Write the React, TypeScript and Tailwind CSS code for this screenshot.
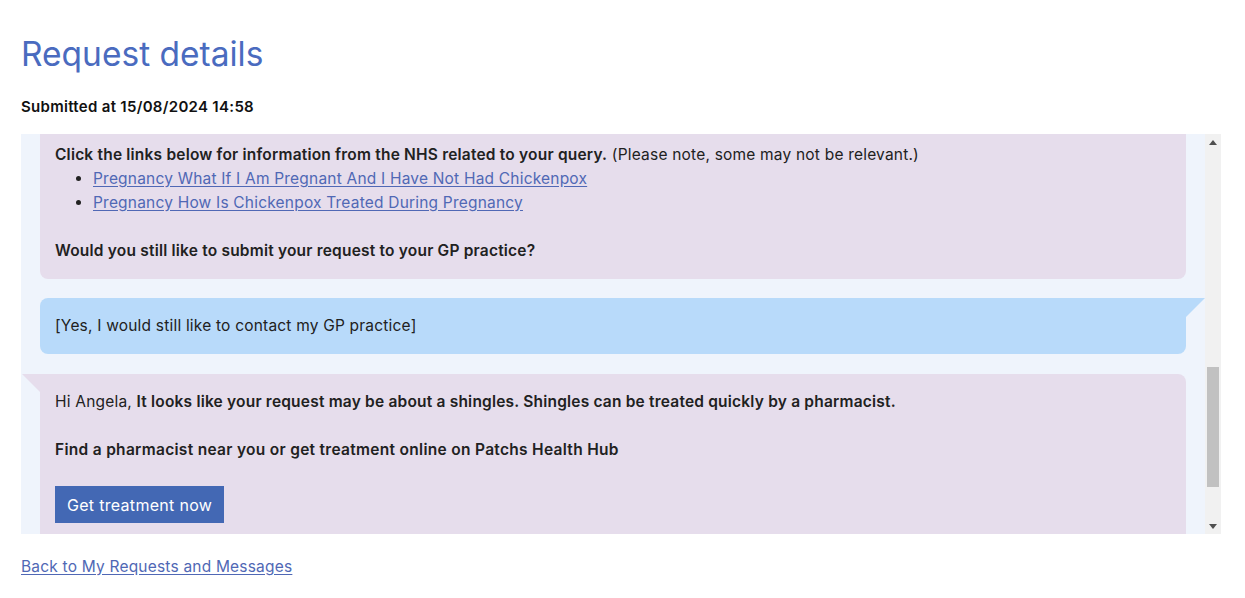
import { useLayoutEffect, useRef } from 'react';

type Msg = { from: 'practice' | 'patient'; lines: string[] };

const earlier: Msg[] = [
  { from: 'practice', lines: ['Hi Angela, what would you like help with today?'] },
  { from: 'patient', lines: ['[Something else]'] },
  { from: 'practice', lines: ['Please describe your problem in a few words.'] },
  { from: 'patient', lines: ['[I have a painful rash on one side of my body and I am pregnant]'] },
  { from: 'practice', lines: ['How long have you had this problem?'] },
  { from: 'patient', lines: ['[Less than a week]'] },
  { from: 'practice', lines: ['Have you had chickenpox before?'] },
  { from: 'patient', lines: ['[No, I have not had chickenpox]'] },
];

const PracticeBubble = ({ children }: { children: React.ReactNode }) => (
  <div className="relative mx-[19px] mb-[19px] rounded-lg rounded-tl-none bg-[#e6ddec] px-[15px] py-[16px]">
    <span className="absolute -left-[18px] top-0 h-[18px] w-[18px] bg-[#e6ddec] [clip-path:polygon(0_0,100%_0,100%_100%)]" />
    {children}
  </div>
);

const PatientBubble = ({ children, innerRef }: { children: React.ReactNode; innerRef?: React.Ref<HTMLDivElement> }) => (
  <div
    ref={innerRef}
    className="relative mx-[19px] mb-[20px] min-h-[56px] rounded-lg rounded-tr-none bg-[#b8dafa] px-[15px] py-[16px]"
  >
    <span className="absolute -right-[19px] top-0 h-[19px] w-[19px] bg-[#b8dafa] [clip-path:polygon(0_0,100%_0,0_100%)]" />
    {children}
  </div>
);

const linkCls = 'text-[#5068b5] underline underline-offset-2';

// drawn scrollbar, the page's own one is hidden
const Scrollbar = () => (
  <div className="flex w-[16px] shrink-0 flex-col items-center bg-[#f1f1f1]">
    <div className="flex h-[16px] w-full items-center justify-center">
      <svg width="8" height="5" viewBox="0 0 8 5"><path d="M4 0 L8 5 L0 5 Z" fill="#505050" /></svg>
    </div>
    <div className="h-[217px]" />
    <div className="h-[120px] w-[12px] bg-[#c1c1c1]" />
    <div className="flex-1" />
    <div className="flex h-[16px] w-full items-center justify-center">
      <svg width="8" height="5" viewBox="0 0 8 5"><path d="M0 0 L8 0 L4 5 Z" fill="#505050" /></svg>
    </div>
  </div>
);

export default function App() {
  const boxRef = useRef<HTMLDivElement>(null);
  const yesRef = useRef<HTMLDivElement>(null);

  useLayoutEffect(() => {
    if (boxRef.current && yesRef.current) {
      boxRef.current.scrollTop = yesRef.current.offsetTop - 164;
    }
  }, []);

  return (
    <div className="min-h-screen bg-white px-[21px] pt-[30px] text-[15.5px] leading-6 tracking-[0.2px] text-[#212121] [font-family:Inter,'Noto_Sans',sans-serif]">
      <h1 className="text-[33.5px] leading-[48px] font-normal tracking-normal text-[#4a6bbf]">Request details</h1>
      <div className="mt-[17px] text-[15px] font-semibold tracking-[0.3px] text-[#111]">Submitted at 15/08/2024 14:58</div>

      <div className="mt-[15px] flex h-[400px] w-[1200px] bg-[#eff4fc]">
        <div
          ref={boxRef}
          className="relative flex-1 overflow-y-scroll pt-[20px] [scrollbar-width:none]"
        >
          {earlier.map((m, i) =>
            m.from === 'practice' ? (
              <PracticeBubble key={i}>
                {m.lines.map((l) => (
                  <p key={l} className="font-semibold">{l}</p>
                ))}
              </PracticeBubble>
            ) : (
              <PatientBubble key={i}>
                {m.lines.map((l) => (
                  <p key={l}>{l}</p>
                ))}
              </PatientBubble>
            )
          )}

          <PracticeBubble>
            <p>
              Hi Angela, <span className="font-semibold">It looks like your request may be about chickenpox in pregnancy.</span>
            </p>
            <p>&nbsp;</p>
            <p>
              <span className="font-semibold">Click the links below for information from the NHS related to your query.</span>{' '}
              (Please note, some may not be relevant.)
            </p>
            <ul className="list-disc pl-[38px]">
              <li>
                <a href="#" className={linkCls}>Pregnancy What If I Am Pregnant And I Have Not Had Chickenpox</a>
              </li>
              <li>
                <a href="#" className={linkCls}>Pregnancy How Is Chickenpox Treated During Pregnancy</a>
              </li>
            </ul>
            <p>&nbsp;</p>
            <p className="font-semibold">Would you still like to submit your request to your GP practice?</p>
          </PracticeBubble>

          <PatientBubble innerRef={yesRef}>
            <p>[Yes, I would still like to contact my GP practice]</p>
          </PatientBubble>

          <PracticeBubble>
            <p>
              Hi Angela,{' '}
              <span className="font-semibold">
                It looks like your request may be about a shingles. Shingles can be treated quickly by a pharmacist.
              </span>
            </p>
            <p>&nbsp;</p>
            <p className="font-semibold tracking-[0.3px]">Find a pharmacist near you or get treatment online on Patchs Health Hub</p>
            <button className="mt-[24px] h-[37px] bg-[#4368b4] px-[12px] text-[16px] tracking-[0.3px] text-white">Get treatment now</button>
            <p className="mt-[16px]">&nbsp;</p>
            <p className="font-semibold">Or continue below to send your request to your GP practice.</p>
          </PracticeBubble>
        </div>
        <Scrollbar />
      </div>

      <div className="mt-[21px]">
        <a href="#" className={linkCls}>Back to My Requests and Messages</a>
      </div>
    </div>
  );
}
